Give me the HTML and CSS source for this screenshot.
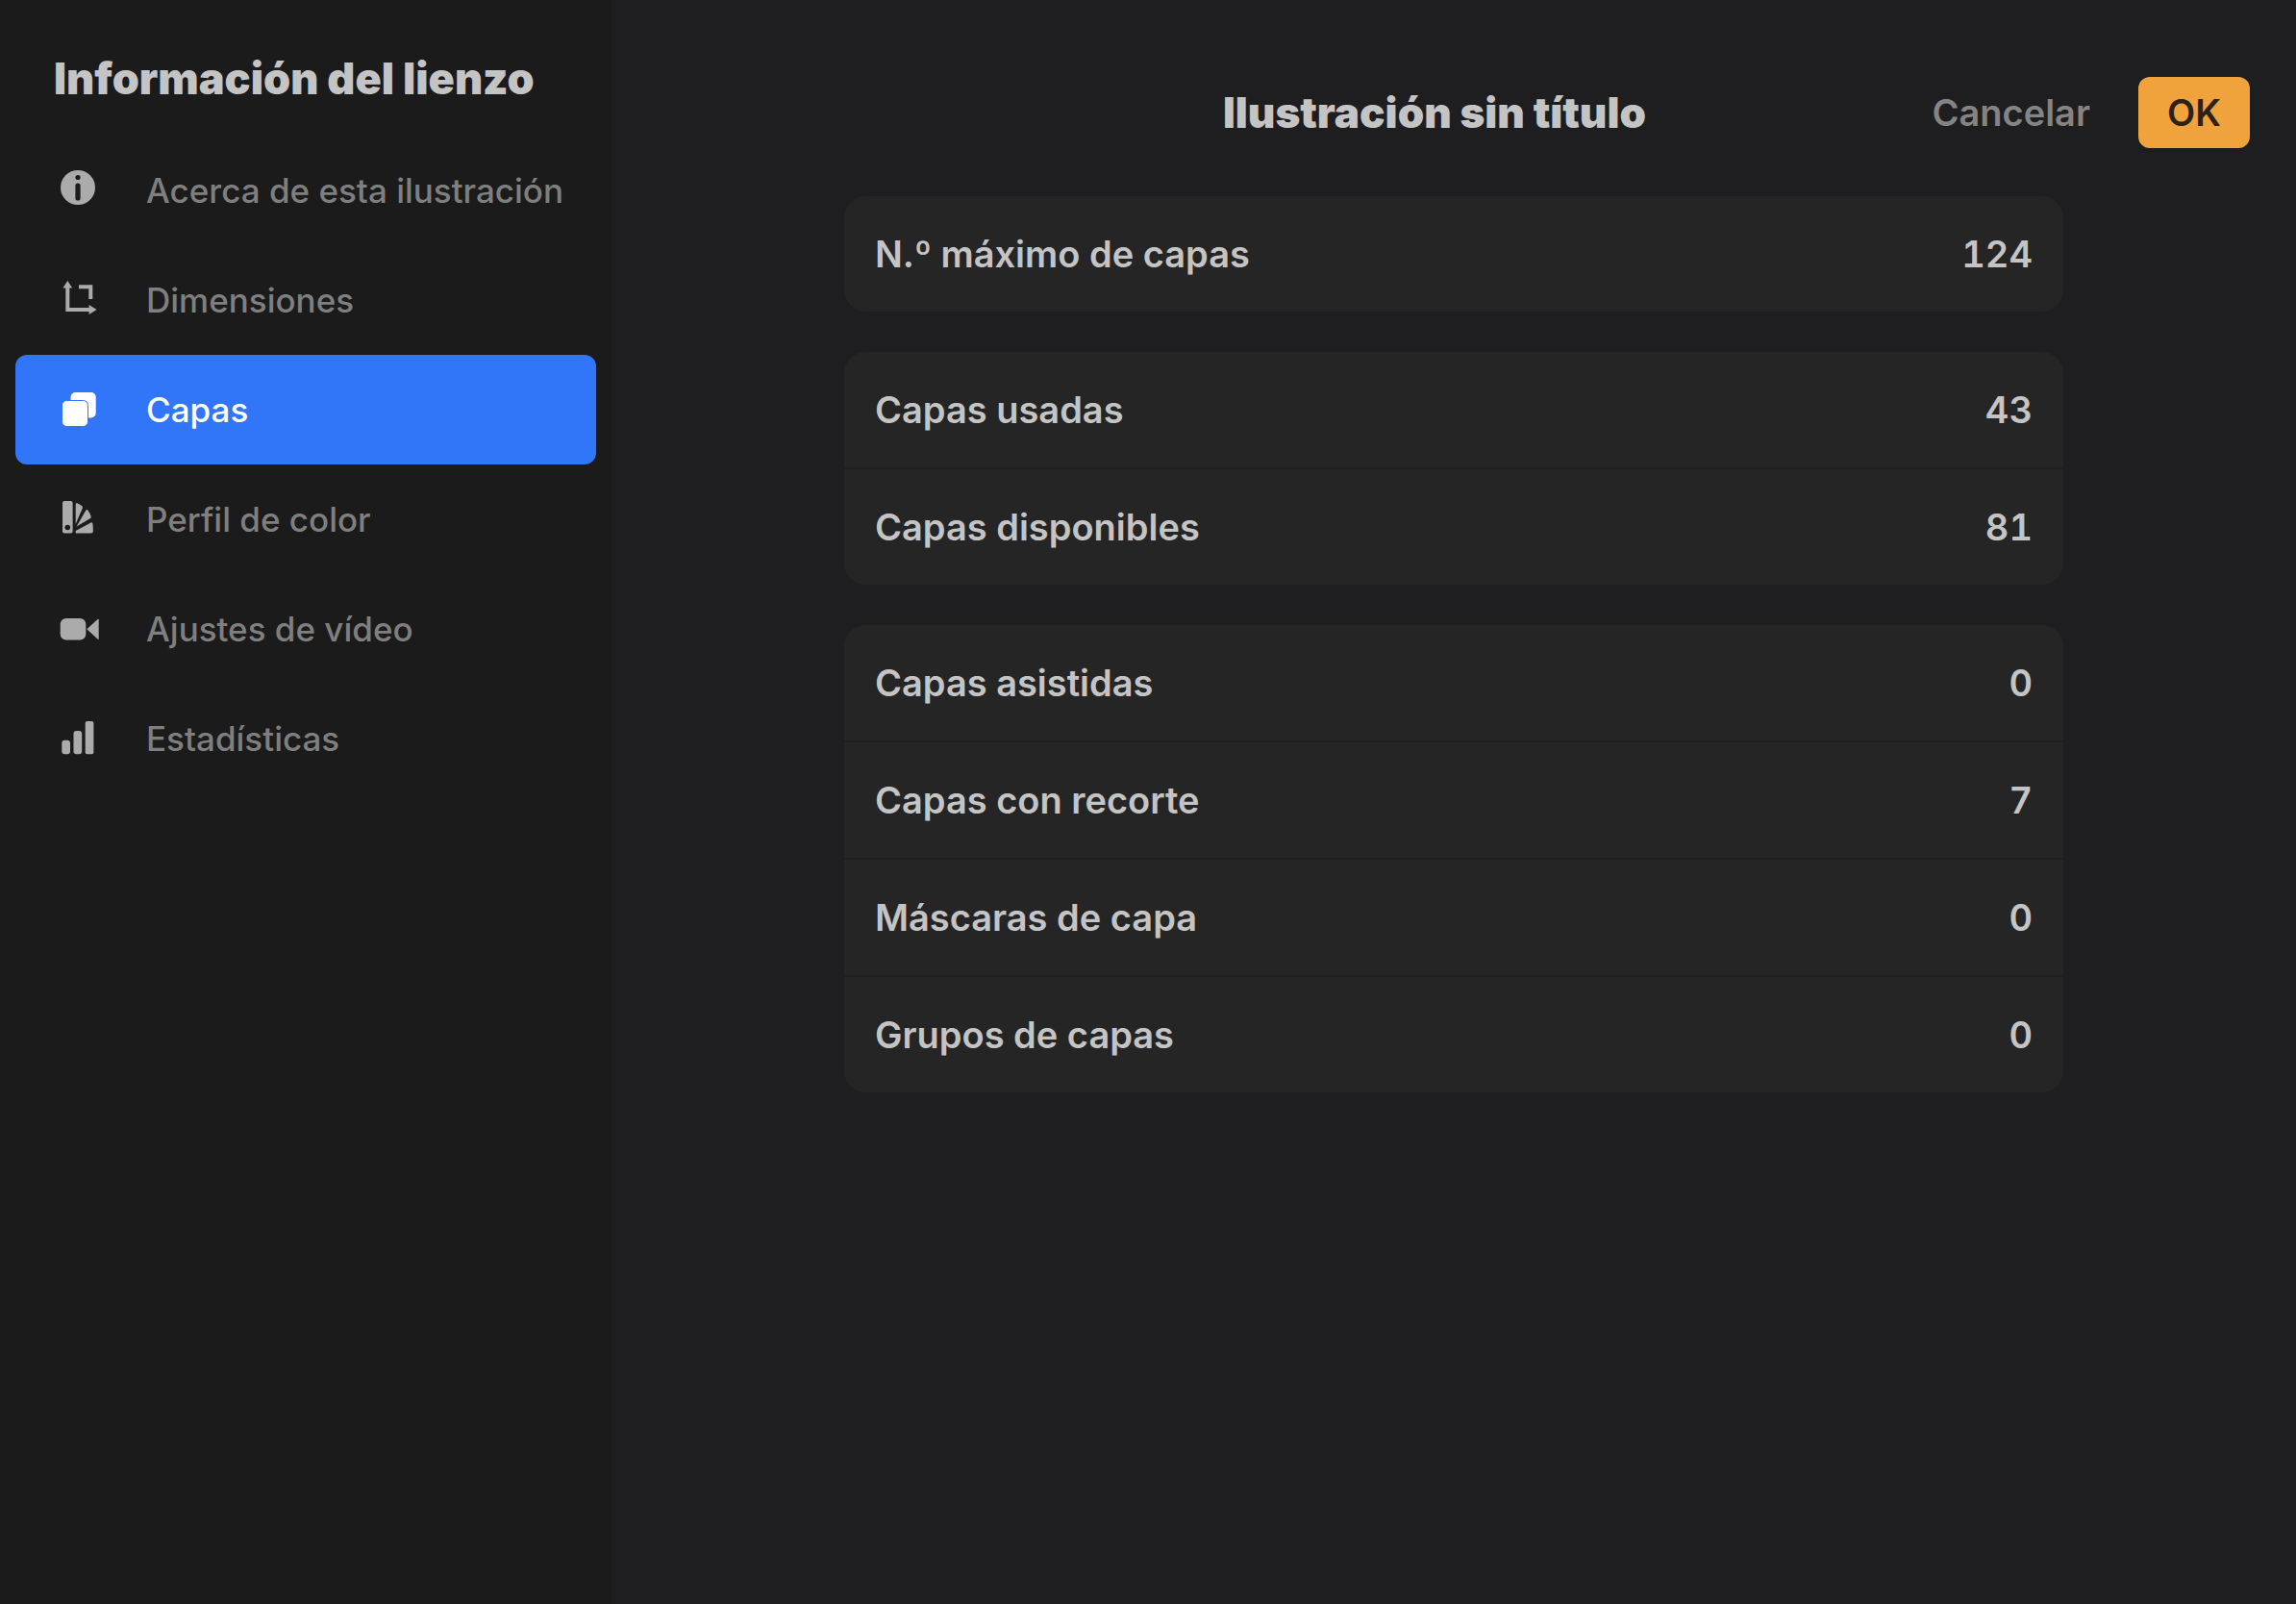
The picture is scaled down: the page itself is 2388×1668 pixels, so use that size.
FILE: index.html
```html
<!DOCTYPE html>
<html lang="es">
<head>
<meta charset="UTF-8">
<meta name="viewport" content="width=device-width, initial-scale=1.0">
<title>Información del lienzo</title>
<link rel="stylesheet" href="styles.css">
</head>
<body>

<aside class="sidebar">
    <h1 class="sidebar-title">Información del lienzo</h1>
    <nav class="menu">
        <a class="menu-item" href="#acerca">
            <svg class="icon" viewBox="0 0 48 48" aria-hidden="true">
                <circle cx="24" cy="21" r="18"/>
                <circle class="cut" cx="24" cy="10.5" r="2.6"/>
                <rect class="cut" x="21.4" y="16.5" width="5.2" height="18" rx="2.6"/>
            </svg>
            Acerca de esta ilustración
        </a>
        <a class="menu-item" href="#dimensiones">
            <svg class="icon" viewBox="0 0 48 48" aria-hidden="true">
                <path class="line" d="M13.3 10v24H36M25 10.3h12.3V23"/>
                <path d="M13.3 4l4.9 7.5H8.4zM43.6 34l-8 5V29z"/>
            </svg>
            Dimensiones
        </a>
        <a class="menu-item active" href="#capas" aria-current="page">
            <svg class="icon" viewBox="0 0 48 48" aria-hidden="true">
                <rect x="16.5" y="6" width="26.2" height="26.4" rx="5"/>
                <rect class="front" x="7.5" y="14.5" width="27" height="27" rx="5"/>
            </svg>
            Capas
        </a>
        <a class="menu-item" href="#perfil">
            <svg class="icon" viewBox="0 0 48 48" aria-hidden="true">
                <rect x="8" y="5" width="10.6" height="33.5" rx="2"/>
                <circle class="cut" cx="13.3" cy="32.5" r="2.8"/>
                <path d="M21.7 8.5q0-1.7 1.6-1.2q2.6.8 5 3q1 .9.5 2.1L21.7 29z"/>
                <path d="M32.3 14.7q1.2-1.3 2.2 0q2.3 3 3.2 6.6q.3 1.3-1 2L22.6 31.5z"/>
                <path d="M37.6 27.5q1.5-.7 1.8.9q.6 3.7.4 8.3q-.1 1.8-1.8 1.8H21.7V36z"/>
            </svg>
            Perfil de color
        </a>
        <a class="menu-item" href="#video">
            <svg class="icon" viewBox="0 0 48 48" aria-hidden="true">
                <rect x="5.7" y="13" width="26.6" height="22.6" rx="6"/>
                <path d="M33.3 24.3L44.5 14q1.2-.8 1.2.6v19.4q0 1.4-1.2.6z"/>
            </svg>
            Ajustes de vídeo
        </a>
        <a class="menu-item" href="#estadisticas">
            <svg class="icon" viewBox="0 0 48 48" aria-hidden="true">
                <rect x="7.3" y="25.7" width="8.7" height="14.6" rx="3"/>
                <rect x="19.5" y="16" width="8.7" height="24.3" rx="3"/>
                <rect x="31.7" y="6" width="8.7" height="34.3" rx="2"/>
            </svg>
            Estadísticas
        </a>
    </nav>
</aside>

<main class="content">
    <header class="topbar">
        <h2 class="topbar-title">Ilustración sin título</h2>
        <div class="actions">
            <button type="button" class="btn-cancel">Cancelar</button>
            <button type="button" class="btn-ok">OK</button>
        </div>
    </header>

    <div class="cards">
        <dl class="card">
            <div class="row"><dt>N.º máximo de capas</dt><dd>124</dd></div>
        </dl>
        <dl class="card">
            <div class="row"><dt>Capas usadas</dt><dd>43</dd></div>
            <div class="row"><dt>Capas disponibles</dt><dd>81</dd></div>
        </dl>
        <dl class="card">
            <div class="row"><dt>Capas asistidas</dt><dd>0</dd></div>
            <div class="row"><dt>Capas con recorte</dt><dd>7</dd></div>
            <div class="row"><dt>Máscaras de capa</dt><dd>0</dd></div>
            <div class="row"><dt>Grupos de capas</dt><dd>0</dd></div>
        </dl>
    </div>
</main>

</body>
</html>
```

FILE: styles.css
```css
* {
    box-sizing: border-box;
}
body {
    margin: 0;
    display: flex;
    min-height: 100vh;
    background-color: #1e1e20;
    color: #c4c4c4;
    font-family: Inter, "Liberation Sans", sans-serif;
    font-size: 38px;
    font-weight: 600;
}

/* Barra lateral */
.sidebar {
    flex: 0 0 636px;
    padding: 54px 16px 0;
    background-color: #1b1b1b;
}
.sidebar-title {
    margin: 0 0 31px;
    padding-left: 40px;
    font-size: 45px;
    font-weight: 900;
    line-height: 56px;
}
.menu-item {
    display: flex;
    align-items: center;
    gap: 47px;
    height: 114px;
    padding-left: 41px;
    border-radius: 12px;
    color: #7f7f7f;
    font-size: 35px;
    font-weight: 500;
    white-space: nowrap;
    text-decoration: none;
}
.menu-item.active {
    background-color: #3175f8;
    color: #fff;
}
.icon {
    flex: none;
    width: 48px;
    height: 48px;
    fill: #ababab;
}
.icon .cut {
    fill: #1b1b1b;
}
.icon .line {
    fill: none;
    stroke: #ababab;
    stroke-width: 4;
}
.active .icon {
    fill: #fff;
}
.icon .front {
    stroke: #3175f8;
    stroke-width: 1;
}

/* Contenido */
.content {
    flex: 1;
}
.topbar {
    display: grid;
    grid-template-columns: 1fr auto 1fr;
    align-items: center;
    padding: 80px 48px 50px 8px;
}
.topbar-title {
    grid-column: 2;
    margin: 0;
    font-size: 44px;
    font-weight: 900;
    line-height: 56px;
}
.actions {
    display: flex;
    justify-content: flex-end;
    gap: 50px;
}
.actions button {
    height: 74px;
    border: none;
    font: inherit;
    cursor: pointer;
}
.btn-cancel {
    padding: 0;
    background: none;
    color: #848484;
}
.actions .btn-ok {
    min-width: 116px;
    padding: 0 24px;
    border-radius: 12px;
    background-color: #f0a33c;
    color: #2b231a;
}
.cards {
    display: flex;
    flex-direction: column;
    gap: 42px;
    max-width: 1268px;
    margin: 0 auto;
}
.card {
    margin: 0;
    border-radius: 22px;
    background-color: #252525;
}
.row {
    display: flex;
    justify-content: space-between;
    align-items: center;
    padding: 0 32px;
    line-height: 120px;
}
.row + .row {
    border-top: 2px solid #1f1f20;
}
.row dd {
    margin: 0;
    font-variant-numeric: tabular-nums;
}
```
